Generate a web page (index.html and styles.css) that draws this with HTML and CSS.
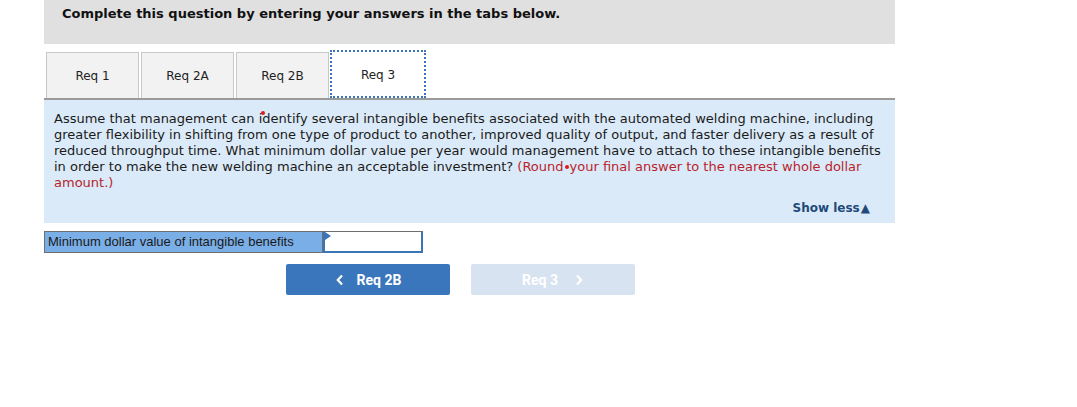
FILE: index.html
```html
<!DOCTYPE html>
<html>
<head>
<meta charset="utf-8">
<link rel="stylesheet" href="styles.css">
</head>
<body>
<div class="wrap">
  <div class="header">Complete this question by entering your answers in the tabs below.</div>
  <div class="tabs">
    <div class="tab">Req 1</div>
    <div class="tab">Req 2A</div>
    <div class="tab">Req 2B</div>
    <div class="tab active">Req 3</div>
  </div>
  <div class="panel">
    <p class="question">Assume that management can i<span class="mark">d</span>entify several intangible benefits associated with the automated welding machine, including greater flexibility in shifting from one type of product to another, improved quality of output, and faster delivery as a result of reduced throughput time. What minimum dollar value per year would management have to attach to these intangible benefits in order to make the new welding machine an acceptable investment? <span class="red">(Round<span class="dot"></span>your final answer to the nearest whole dollar amount.)</span></p>
    <div class="showless">Show less<span class="tri">&#9650;</span></div>
  </div>
  <div class="answer">
    <div class="label">Minimum dollar value of intangible benefits</div>
    <div class="input"><span class="flag"></span></div>
  </div>
  <div class="nav">
    <div class="btn prev">
      <svg width="10" height="12" viewBox="0 0 10 12"><path d="M7 1.5 L2.8 6 L7 10.5" fill="none" stroke="#fff" stroke-width="2.2"/></svg>
      <span>Req 2B</span>
    </div>
    <div class="btn next">
      <span>Req 3</span>
      <svg width="10" height="12" viewBox="0 0 10 12"><path d="M3 1.5 L7.2 6 L3 10.5" fill="none" stroke="#fff" stroke-width="2.2"/></svg>
    </div>
  </div>
</div>
</body>
</html>
```
FILE: styles.css
```css
* { box-sizing: border-box; }
body {
  margin: 0;
  background: #fff;
  font-family: "DejaVu Sans", Verdana, sans-serif;
  color: #111;
}
.wrap {
  margin-left: 44px;
  width: 851px;
}
.header {
  height: 44px;
  background: #e0e0e0;
  padding: 6px 0 0 18px;
  font-size: 13px;
  font-weight: bold;
  color: #111;
  line-height: 16px;
}
.tabs {
  display: flex;
  gap: 2px;
  margin-top: 7px;
  padding-left: 2px;
  border-bottom: 2px solid #9a9a9a;
  height: 49px;
  align-items: flex-end;
}
.tab {
  width: 93px;
  height: 46px;
  background: #f2f2f2;
  border: 1px solid #c8c8c8;
  border-bottom: none;
  font-size: 12px;
  display: flex;
  align-items: center;
  justify-content: center;
  color: #222;
}
.tab.active {
  background: #fff;
  width: 96px;
  height: 48px;
  margin-left: -1px;
  border: 2px dotted #3c74b8;
  padding-top: 2px;
}
.panel {
  background: #dbeaf8;
  padding: 11px 12px 7px 10px;
}
.question {
  margin: 0;
  font-size: 13px;
  line-height: 16px;
  color: #1a1a1a;
}
.mark { position: relative; }
.mark::before {
  content: "";
  position: absolute;
  left: -1px;
  top: 0;
  width: 4px;
  height: 4px;
  border-radius: 50%;
  background: #e01818;
}
.red { color: #b81f2c; }
.dot {
  display: inline-block;
  width: 4px;
  height: 4px;
  border-radius: 50%;
  background: #e01818;
  margin: 0 1px 2px 1px;
  vertical-align: middle;
}
.showless {
  text-align: right;
  font-size: 12px;
  font-weight: bold;
  color: #1f4a7a;
  margin-top: 9px;
  line-height: 16px;
  padding-right: 13px;
}
.tri { font-size: 12px; margin-left: 1px; }
.answer {
  display: flex;
  margin-top: 8px;
  height: 22px;
}
.label {
  width: 279px;
  background: #7aaee6;
  border: 1px solid #6e6e6e;
  font-family: "Liberation Sans", Arial, sans-serif;
  font-size: 13px;
  color: #1a1a1a;
  padding: 2px 0 0 3px;
}
.input {
  position: relative;
  width: 100px;
  background: #fff;
  border: 1px solid #6e6e6e;
  border-left: 2px solid #3c74b8;
  border-right: 2px solid #3c74b8;
  border-bottom: 2px solid #3c74b8;
}
.flag {
  position: absolute;
  left: 0;
  top: 0;
  width: 0;
  height: 0;
  border-top: 4px solid transparent;
  border-bottom: 4px solid transparent;
  border-left: 6px solid #3c74b8;
}
.nav {
  display: flex;
  gap: 21px;
  margin-top: 11px;
  margin-left: 242px;
}
.btn {
  width: 164px;
  height: 31px;
  border-radius: 2px;
  display: flex;
  align-items: center;
  justify-content: center;
  gap: 12px;
  font-family: Roboto, "Liberation Sans", sans-serif;
  font-weight: bold;
  font-size: 14px;
  color: #fff;
}
.prev { background: #3a76bb; }
.next { background: #d7e3f1; gap: 16px; }
```
